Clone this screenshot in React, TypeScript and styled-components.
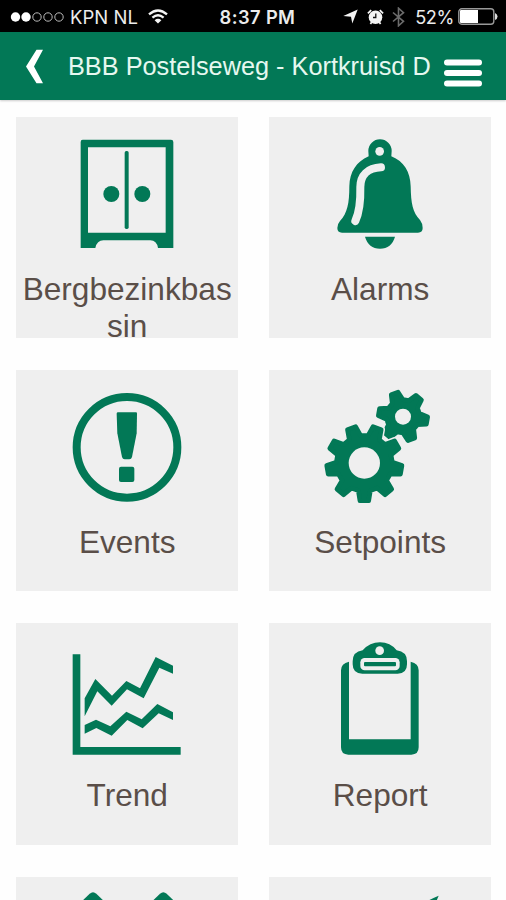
import React from "react";
import styled, { createGlobalStyle } from "styled-components";

const GREEN = "#027856";
const TILE = "#efefef";

const GlobalStyle = createGlobalStyle`
  html, body { margin: 0; padding: 0; background: #fefefe; }
  body { overflow: hidden; }
  * { box-sizing: border-box; }
`;

const Screen = styled.div`
  width: 506px;
  height: 900px;
  overflow: hidden;
  background: #fefefe;
  font-family: "Liberation Sans", Arial, sans-serif;
`;

const StatusBar = styled.div`
  display: grid;
  grid-template-columns: 1fr auto 1fr;
  align-items: center;
  height: 32px;
  padding: 1px 8px 0 10px;
  background: #000;
  color: #ececec;
  font-family: Inter, "Liberation Sans", sans-serif;
`;

const StatusGroup = styled.div<{ $end?: boolean }>`
  display: flex;
  align-items: center;
  justify-content: ${(p) => (p.$end ? "flex-end" : "flex-start")};
`;

const Carrier = styled.span`
  margin: 0 10px 0 5px;
  font-size: 18.5px;
  letter-spacing: 0.05px;
  white-space: nowrap;
`;

const Clock = styled.span`
  margin-left: 7px;
  font-size: 18.3px;
  font-weight: 600;
  letter-spacing: 0.4px;
  white-space: nowrap;
`;

const Percent = styled.span`
  margin: 0 4px 0 10px;
  font-size: 18.2px;
  letter-spacing: -0.4px;
`;

const StatusIcon = styled.svg<{ $gap?: number }>`
  display: block;
  flex: none;
  margin-left: ${(p) => p.$gap ?? 0}px;
`;

const Header = styled.header`
  display: flex;
  align-items: center;
  height: 68px;
  padding: 0 24px 0 25px;
  background: ${GREEN};
  box-shadow: 0 1px 2px rgba(0, 0, 0, 0.2);
`;

const HeaderButton = styled.button`
  display: block;
  flex: none;
  padding: 0;
  border: 0;
  background: none;
  line-height: 0;
`;

const Title = styled.h1`
  flex: 1;
  margin: 0 0 0 24px;
  color: #e6f8f0;
  font-size: 25.3px;
  font-weight: 400;
  line-height: 34px;
  white-space: nowrap;
`;

const MenuBars = styled.svg`
  display: block;
  margin-top: 13px;
`;

const TileGrid = styled.main`
  display: grid;
  grid-template-columns: 221.6px 221.6px;
  grid-auto-rows: 221.4px;
  gap: 32px 31.4px;
  padding: 16.6px 0 0 16.4px;
`;

const Tile = styled.section`
  background: ${TILE};
`;

const Pictogram = styled.svg`
  display: block;
  width: 222px;
  height: 154px;
  fill: ${GREEN};
`;

const Label = styled.div`
  padding: 0 6px;
  color: #5a4e48;
  font-size: 31.6px;
  line-height: 37px;
  text-align: center;
  overflow-wrap: anywhere;
`;

function gearPath(cx: number, cy: number, teeth: number, start: number, tip: number, root: number, tipHalf: number, rootHalf: number) {
  const point = (deg: number, r: number) => {
    const a = (deg * Math.PI) / 180;
    return `${(cx + r * Math.cos(a)).toFixed(1)} ${(cy + r * Math.sin(a)).toFixed(1)}`;
  };
  let d = "";
  for (let i = 0; i < teeth; i++) {
    const a = start + (i * 360) / teeth;
    d += `${i ? "L" : "M"}${point(a - rootHalf, root)}L${point(a - tipHalf, tip)}L${point(a + tipHalf, tip)}L${point(a + rootHalf, root)}`;
  }
  return d + "Z";
}

const Cabinet = () => (
  <Pictogram viewBox="19 20 666 462">
    <path fillRule="evenodd" d="M219 88H484Q491 88 491 95V413H445Q441 390 422 390H281Q262 390 257 413H213V95Q213 88 219 88ZM235 111V367H468V111Z" />
    <rect x="345" y="122" width="12" height="234" rx="5" />
    <circle cx="305" cy="251" r="24" />
    <circle cx="398" cy="251" r="24" />
  </Pictogram>
);

const Bell = () => (
  <Pictogram viewBox="22 20 666 462">
    <path d="M320 122A35 35 0 0 1 390 122L389 138C427 153 446 185 447 228C448 280 453 307 475 329Q484 341 483 353Q483 367 469 367H241Q227 367 227 353Q227 341 235 332C257 309 263 279 263 228C264 185 284 154 321 138Z" />
    <path d="M310 379H400C393 403 378 415 355 415C332 415 317 403 310 379Z" />
    <circle cx="354" cy="123" r="13" fill={TILE} />
    <path d="M358 171C318 173 296 195 296 230C297 276 294 304 281 332" fill="none" stroke={TILE} strokeWidth="24" strokeLinecap="round" />
  </Pictogram>
);

const Exclamation = () => (
  <Pictogram viewBox="19 15 666 462">
    <circle cx="352" cy="247" r="151" fill="none" stroke={GREEN} strokeWidth="24" />
    <path d="M325 142H379Q382 142 382 146L381 205L367 276Q365 283 359 283H345Q339 283 337 276L323 205L321 146Q321 142 325 142Z" />
    <rect x="328" y="305" width="46" height="46" rx="6" />
  </Pictogram>
);

const BIG_GEAR = gearPath(308, 294, 9, 90, 113, 84, 6.6, 12.4);
const SMALL_GEAR = gearPath(424, 153, 6, 10, 74, 50, 8.5, 20);

const Gears = () => (
  <Pictogram viewBox="22 14 666 462" strokeLinejoin="round">
    <path d={SMALL_GEAR} stroke={GREEN} strokeWidth="14" />
    <circle cx="424" cy="154" r="24" fill={TILE} />
    <path d={BIG_GEAR} stroke={TILE} strokeWidth="23" />
    <path d={BIG_GEAR} stroke={GREEN} strokeWidth="14" />
    <circle cx="308" cy="293" r="47" fill={TILE} />
  </Pictogram>
);

const Chart = () => (
  <Pictogram viewBox="19 15 666 462">
    <path d="M189 109H212V387H513V410H189Z" />
    <path d="M225 241L257 183L307 233L350 189L391 211L438 117L490 143V167L449 149L402 241L352 214L306 263L263 220L225 295Z" />
    <path d="M225 321L259 305L302 325L350 281L396 304L443 258L490 283V306L447 286L399 331L353 306L306 353L260 330L225 347Z" />
  </Pictogram>
);

const Clipboard = () => (
  <Pictogram viewBox="22 15 666 462">
    <path d="M262 131V364H447V131Q471 136 471 157V388Q471 410 449 410H260Q238 410 238 388V157Q238 136 262 131Z" />
    <path d="M303 97Q324 73 355 73Q386 73 405 97Q436 101 436 130V139Q436 167 408 167H302Q273 167 273 139V130Q273 101 303 97Z" />
    <circle cx="354" cy="98" r="13" fill={TILE} />
    <rect x="296" y="120" width="118" height="37" rx="13" fill={TILE} />
    <rect x="307" y="132" width="96" height="13" rx="3" />
  </Pictogram>
);

const Peaks = () => (
  <Pictogram viewBox="49 111 666 462">
    <path d="M228 202L270 161Q280 152 290 161L332 202Z" />
    <path d="M439 202L481 161Q491 152 501 161L543 202Z" />
  </Pictogram>
);

const Pencil = () => (
  <Pictogram viewBox="49 111 666 462">
    <path d="M506 197Q532 176 558 167Q553 178 547 197Z" />
  </Pictogram>
);

const tiles: { label: string; Icon: React.FC }[] = [
  { label: "Bergbezinkbassin", Icon: Cabinet },
  { label: "Alarms", Icon: Bell },
  { label: "Events", Icon: Exclamation },
  { label: "Setpoints", Icon: Gears },
  { label: "Trend", Icon: Chart },
  { label: "Report", Icon: Clipboard },
  { label: "", Icon: Peaks },
  { label: "", Icon: Pencil },
];

const SignalDots = () => (
  <StatusIcon width="55" height="12" viewBox="0 0 55 12">
    {[5.5, 16, 27, 38, 49].map((x, i) =>
      i < 2 ? (
        <circle key={x} cx={x} cy="6" r="4.7" fill="#fff" />
      ) : (
        <circle key={x} cx={x} cy="6" r="4.2" fill="none" stroke="#bbb" strokeWidth="1" />
      ),
    )}
  </StatusIcon>
);

const Wifi = () => (
  <StatusIcon width="20" height="15" viewBox="0 0 20 15" fill="none" stroke="#f4f4f4" strokeWidth="2.3">
    <path d="M1 5.4Q10-2.4 19 5.4" />
    <path d="M4.4 8.7Q10 3.8 15.6 8.7" />
    <path d="M10 14.5L6.6 11.2Q10 8.3 13.4 11.2Z" fill="#f4f4f4" stroke="none" />
  </StatusIcon>
);

const Location = () => (
  <StatusIcon width="15" height="15" viewBox="0 0 15 15">
    <path d="M14.7 .5L9.3 14.5L8 7.8L.3 7Z" fill="#f4f4f4" />
  </StatusIcon>
);

const AlarmClock = () => (
  <StatusIcon $gap={9} width="17" height="16" viewBox="0 0 17 16">
    <circle cx="8.5" cy="8.2" r="6.8" fill="#f4f4f4" />
    <path d="M.9 4.3L4.2 1.2M16.1 4.3L12.8 1.2M3.4 15L5 12.8M13.6 15L12 12.8" stroke="#f4f4f4" strokeWidth="1.8" />
    <path d="M8.8 4.6V8.5H6" fill="none" stroke="#111" strokeWidth="1.3" />
  </StatusIcon>
);

const Bluetooth = () => (
  <StatusIcon $gap={8} width="13" height="20" viewBox="0 0 13 20">
    <path d="M1 5.5L11.5 14.3L6.5 18.8V1.2L11.5 5.7L1 14.5" fill="none" stroke="#6c6c6c" strokeWidth="1.6" />
  </StatusIcon>
);

const Battery = () => (
  <StatusIcon width="40" height="17" viewBox="0 0 40 17">
    <rect x=".8" y=".8" width="35" height="15.4" rx="3" fill="none" stroke="#999" strokeWidth="1.4" />
    <path d="M3 2H20V15H3Q2 15 2 14V3Q2 2 3 2Z" fill="#fff" />
    <path d="M37 5Q39.5 6 39.5 8.5Q39.5 11 37 12Z" fill="#ddd" />
  </StatusIcon>
);

export default function App() {
  return (
    <Screen>
      <GlobalStyle />
      <StatusBar>
        <StatusGroup>
          <SignalDots />
          <Carrier>KPN NL</Carrier>
          <Wifi />
        </StatusGroup>
        <Clock>8:37 PM</Clock>
        <StatusGroup $end>
          <Location />
          <AlarmClock />
          <Bluetooth />
          <Percent>52%</Percent>
          <Battery />
        </StatusGroup>
      </StatusBar>
      <Header>
        <HeaderButton aria-label="Back">
          <svg width="19" height="35" viewBox="0 0 19 35">
            <path d="M11.5 .8H18L9 17.5L18 34.2H11.5L1 17.5Z" fill="#fff" />
          </svg>
        </HeaderButton>
        <Title>BBB Postelseweg - Kortkruisd D</Title>
        <HeaderButton aria-label="Menu">
          <MenuBars width="38" height="28" viewBox="0 0 38 28" fill="#fff">
            <rect y=".5" width="38" height="6" rx="3" />
            <rect y="11" width="38" height="6" rx="3" />
            <rect y="21.5" width="38" height="6" rx="3" />
          </MenuBars>
        </HeaderButton>
      </Header>
      <TileGrid>
        {tiles.map(({ label, Icon }, i) => (
          <Tile key={i}>
            <Icon />
            <Label>{label}</Label>
          </Tile>
        ))}
      </TileGrid>
    </Screen>
  );
}
